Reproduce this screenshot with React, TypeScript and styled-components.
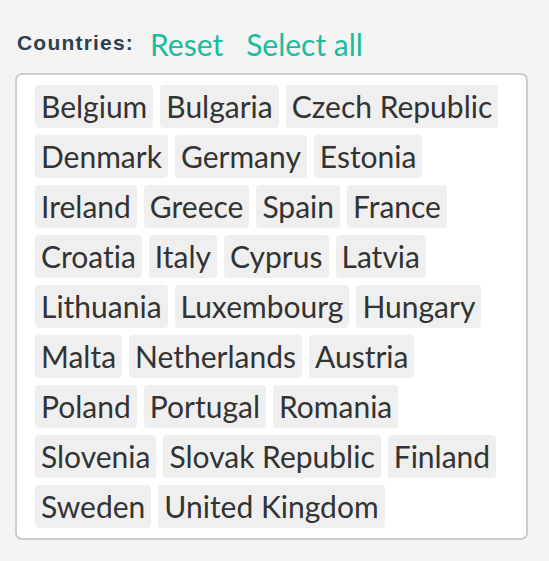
import React from "react";
import styled, { createGlobalStyle } from "styled-components";

const Global = createGlobalStyle`
  html, body { margin: 0; padding: 0; background: #f4f4f4; }
  body { font-family: Lato, "Liberation Sans", sans-serif; }
`;

const Page = styled.div`
  padding: 26px 21px 0 15px;
  width: 513px;
`;

const Header = styled.div`
  display: flex;
  align-items: center;
  gap: 16px;
  padding-left: 2px;
  height: 36px;
  margin-bottom: 11px;
`;

const Label = styled.span`
  font-family: "Liberation Sans", Arial, sans-serif;
  font-weight: bold;
  font-size: 21px;
  letter-spacing: 1.2px;
  color: #2c3e50;
  margin-top: -2px;
`;

const Links = styled.div`
  display: flex;
  gap: 23px;
`;

const LinkBtn = styled.a`
  font-family: Lato, sans-serif;
  font-size: 30px;
  color: #1abc9c;
  cursor: pointer;
  font-variant-ligatures: none;
`;

const Box = styled.div`
  box-sizing: border-box;
  width: 513px;
  border: 2px solid #cccccc;
  border-radius: 7px;
  background: #ffffff;
  padding: 10px 18px 10px 18px;
  display: flex;
  flex-wrap: wrap;
  gap: 7px 7px;
`;

const Tag = styled.span`
  display: inline-block;
  height: 43px;
  line-height: 43px;
  padding: 0 6px;
  background: #efefef;
  border-radius: 4px;
  color: #333333;
  font-family: Lato, sans-serif;
  font-size: 30px;
  white-space: nowrap;
  font-variant-ligatures: none;
`;

const countries = [
  "Belgium", "Bulgaria", "Czech Republic", "Denmark", "Germany", "Estonia",
  "Ireland", "Greece", "Spain", "France", "Croatia", "Italy", "Cyprus", "Latvia",
  "Lithuania", "Luxembourg", "Hungary", "Malta", "Netherlands", "Austria",
  "Poland", "Portugal", "Romania", "Slovenia", "Slovak Republic", "Finland",
  "Sweden", "United Kingdom",
];

export default function App() {
  return (
    <>
      <Global />
      <Page>
        <Header>
          <Label>Countries:</Label>
          <Links>
            <LinkBtn>Reset</LinkBtn>
            <LinkBtn>Select all</LinkBtn>
          </Links>
        </Header>
        <Box>
          {countries.map((c) => (
            <Tag key={c}>{c}</Tag>
          ))}
        </Box>
      </Page>
    </>
  );
}
